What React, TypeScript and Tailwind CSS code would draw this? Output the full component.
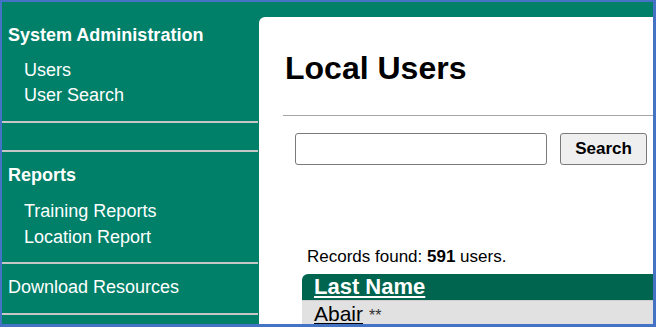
export default function App() {
  const font = { fontFamily: '"Liberation Sans", Arial, sans-serif' };
  return (
    <div
      className="w-[656px] h-[327px] overflow-hidden border-solid border-[#4472c4] border-t-2 border-l-2 border-r-[3px] border-b-[3px]"
      style={font}
    >
      <div className="flex h-full bg-[#008069] text-white">
        {/* Sidebar */}
        <div className="w-[257px] shrink-0 flex flex-col pt-[20px]">
          <div className="pl-[6px] text-[18px] leading-[26px] font-bold">System Administration</div>
          <div className="mt-[10px] pl-[22px] text-[18px] leading-[25px]">
            <div>Users</div>
            <div>User Search</div>
          </div>
          <div className="mt-[13px] h-[2px] mr-[1px] bg-[#c6c6c6]" />
          <div className="mt-[27px] h-[2px] mr-[1px] bg-[#c6c6c6]" />
          <div className="mt-[10px] pl-[6px] text-[18px] leading-[26px] font-bold">Reports</div>
          <div className="mt-[10px] pl-[22px] text-[18px] leading-[26px]">
            <div>Training Reports</div>
            <div>Location Report</div>
          </div>
          <div className="mt-[12px] h-[2px] mr-[1px] bg-[#c6c6c6]" />
          <div className="mt-[10px] pl-[6px] text-[18px] leading-[26px]">Download Resources</div>
          <div className="mt-[13px] h-[2px] mr-[1px] bg-[#c6c6c6]" />
        </div>

        {/* Main */}
        <div className="flex-1 pt-[15px] flex flex-col">
          <div className="flex-1 bg-white rounded-tl-[6px] text-black flex flex-col">
            <h1 className="mt-[33px] pl-[26px] text-[32px] leading-[36px] font-bold">Local Users</h1>
            <div className="mt-[29px] ml-[24px] h-px bg-[#a6a6a6]" />
            <div className="mt-[17px] ml-[36px] flex gap-[13px]">
              <input
                type="text"
                className="w-[252px] h-[32px] border border-[#7a7a7a] rounded-[3px] bg-white outline-none"
              />
              <button
                className="w-[87px] h-[32px] border border-[#7a7a7a] rounded-[3px] bg-[#efefef] text-[17px] font-bold text-black"
                style={font}
              >
                Search
              </button>
            </div>
            <div className="mt-[82px] ml-[48px] text-[17px] leading-[20px]">
              Records found: <span className="font-bold">591</span> users.
            </div>
            <div className="mt-[7px] ml-[43px] flex flex-col">
              <div className="h-[26px] bg-[#00654f] rounded-tl-[6px] pl-[12px] text-[22px] leading-[26px] font-bold text-white">
                <span className="underline decoration-2 underline-offset-[2px]">Last Name</span>
              </div>
              <div className="h-[26px] bg-[#e1e1e1] border-t border-[#cfcfcf] pl-[12px] text-[21px] leading-[25px] text-black">
                <span className="underline decoration-2 underline-offset-[2px]">Abair</span>
                <span className="ml-[6px] text-[16px] text-[#333]">**</span>
              </div>
            </div>
          </div>
        </div>
      </div>
    </div>
  );
}
